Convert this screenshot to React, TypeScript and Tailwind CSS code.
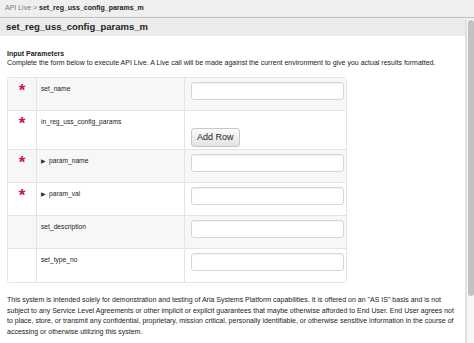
import React from "react";

interface Param {
  name: string;
  required: boolean;
  caret?: boolean;
  addRow?: boolean;
}

const params: Param[] = [
  { name: "set_name", required: true },
  { name: "in_reg_uss_config_params", required: true, addRow: true },
  { name: "param_name", required: true, caret: true },
  { name: "param_val", required: true, caret: true },
  { name: "set_description", required: false },
  { name: "set_type_no", required: false },
];

const ParamRow: React.FC<{ param: Param; index: number; last: boolean }> = ({ param, index, last }) => {
  const shaded = index % 2 === 0;
  return (
    <div
      className={`flex ${param.addRow ? "h-[39px]" : "h-[33px]"} ${shaded ? "bg-[#f7f7f7]" : "bg-white"} ${
        last ? "" : "border-b border-[#e4e4e4]"
      }`}
    >
      <div className="w-[29px] border-r border-[#e4e4e4] flex justify-center pt-[4px]">
        {param.required && <span className="text-[#c6174a] text-[17px] leading-[17px] font-bold">*</span>}
      </div>
      <div className="w-[148px] border-r border-[#e4e4e4] pl-[4px] pt-[6px] text-[6.7px] leading-[10px] text-[#222] flex items-start">
        {param.caret && <span className="text-[5.5px] leading-[10px] mr-[3px] text-[#333]">▶</span>}
        {param.name}
      </div>
      <div className="flex-1 pl-[6px] pr-[2px]">
        {param.addRow ? (
          <button className="mt-[17px] h-[19px] px-[5px] text-[9px] leading-[17px] text-[#222] rounded-[3px] border border-[#c8c8c8] bg-gradient-to-b from-[#fbfbfb] to-[#e3e3e3]">
            Add Row
          </button>
        ) : (
          <div className="mt-[4px] h-[18px] rounded-[3px] border border-[#d6d6d6] bg-white shadow-[inset_0_1px_1px_rgba(0,0,0,0.05)]" />
        )}
      </div>
    </div>
  );
};

export default function App() {
  return (
    <div className="w-[474px] h-[343px] overflow-hidden bg-[#f2f2f2] font-['Liberation_Sans',Arial,sans-serif] flex flex-col">
      <div className="h-[18px] shrink-0 flex items-center px-[5px] text-[7px] bg-[#efefef] border-b border-[#bdbdbd]">
        <span className="text-[#777]">API Live &gt;&nbsp;</span>
        <span className="font-bold text-[#222]">set_reg_uss_config_params_m</span>
      </div>
      <div className="flex flex-1 min-h-0 pt-[1px]">
        <div className="flex-1 flex flex-col bg-white border-r border-[#e2e2e2]">
          <div className="h-[17px] bg-[#ebebeb] flex items-center px-[6px] text-[9.5px] font-bold text-[#222]">
            set_reg_uss_config_params_m
          </div>
          <div className="px-[7px] pt-[13px]">
            <div className="text-[7px] leading-[9px] font-bold text-[#222]">Input Parameters</div>
            <div className="text-[7px] leading-[9px] text-[#222] whitespace-nowrap">
              Complete the form below to execute API Live. A Live call will be made against the current environment to
              give you actual results formatted.
            </div>
            <div className="mt-[10px] w-[340px] border border-[#e4e4e4] rounded-[3px] overflow-hidden">
              {params.map((p, i) => (
                <ParamRow key={p.name} param={p} index={i} last={i === params.length - 1} />
              ))}
            </div>
            <p className="mt-[12px] text-[7px] leading-[10.7px] text-[#222] whitespace-nowrap">
              This system is intended solely for demonstration and testing of Aria Systems Platform capabilities. It is
              offered on an "AS IS" basis and is not
              <br />
              subject to any Service Level Agreements or other implicit or explicit guarantees that maybe otherwise
              afforded to End User. End User agrees not
              <br />
              to place, store, or transmit any confidential, proprietary, mission critical, personally identifiable, or
              otherwise sensitive information in the course of
              <br />
              accessing or otherwise utilizing this system.
            </p>
          </div>
        </div>
        <div className="w-[8px] bg-[#f7f7f7] border-l border-[#e0e0e0] pt-[1px] flex justify-center">
          <div className="w-[6px] h-[276px] rounded-[3px] bg-[#c2c2c2]" />
        </div>
      </div>
    </div>
  );
}
